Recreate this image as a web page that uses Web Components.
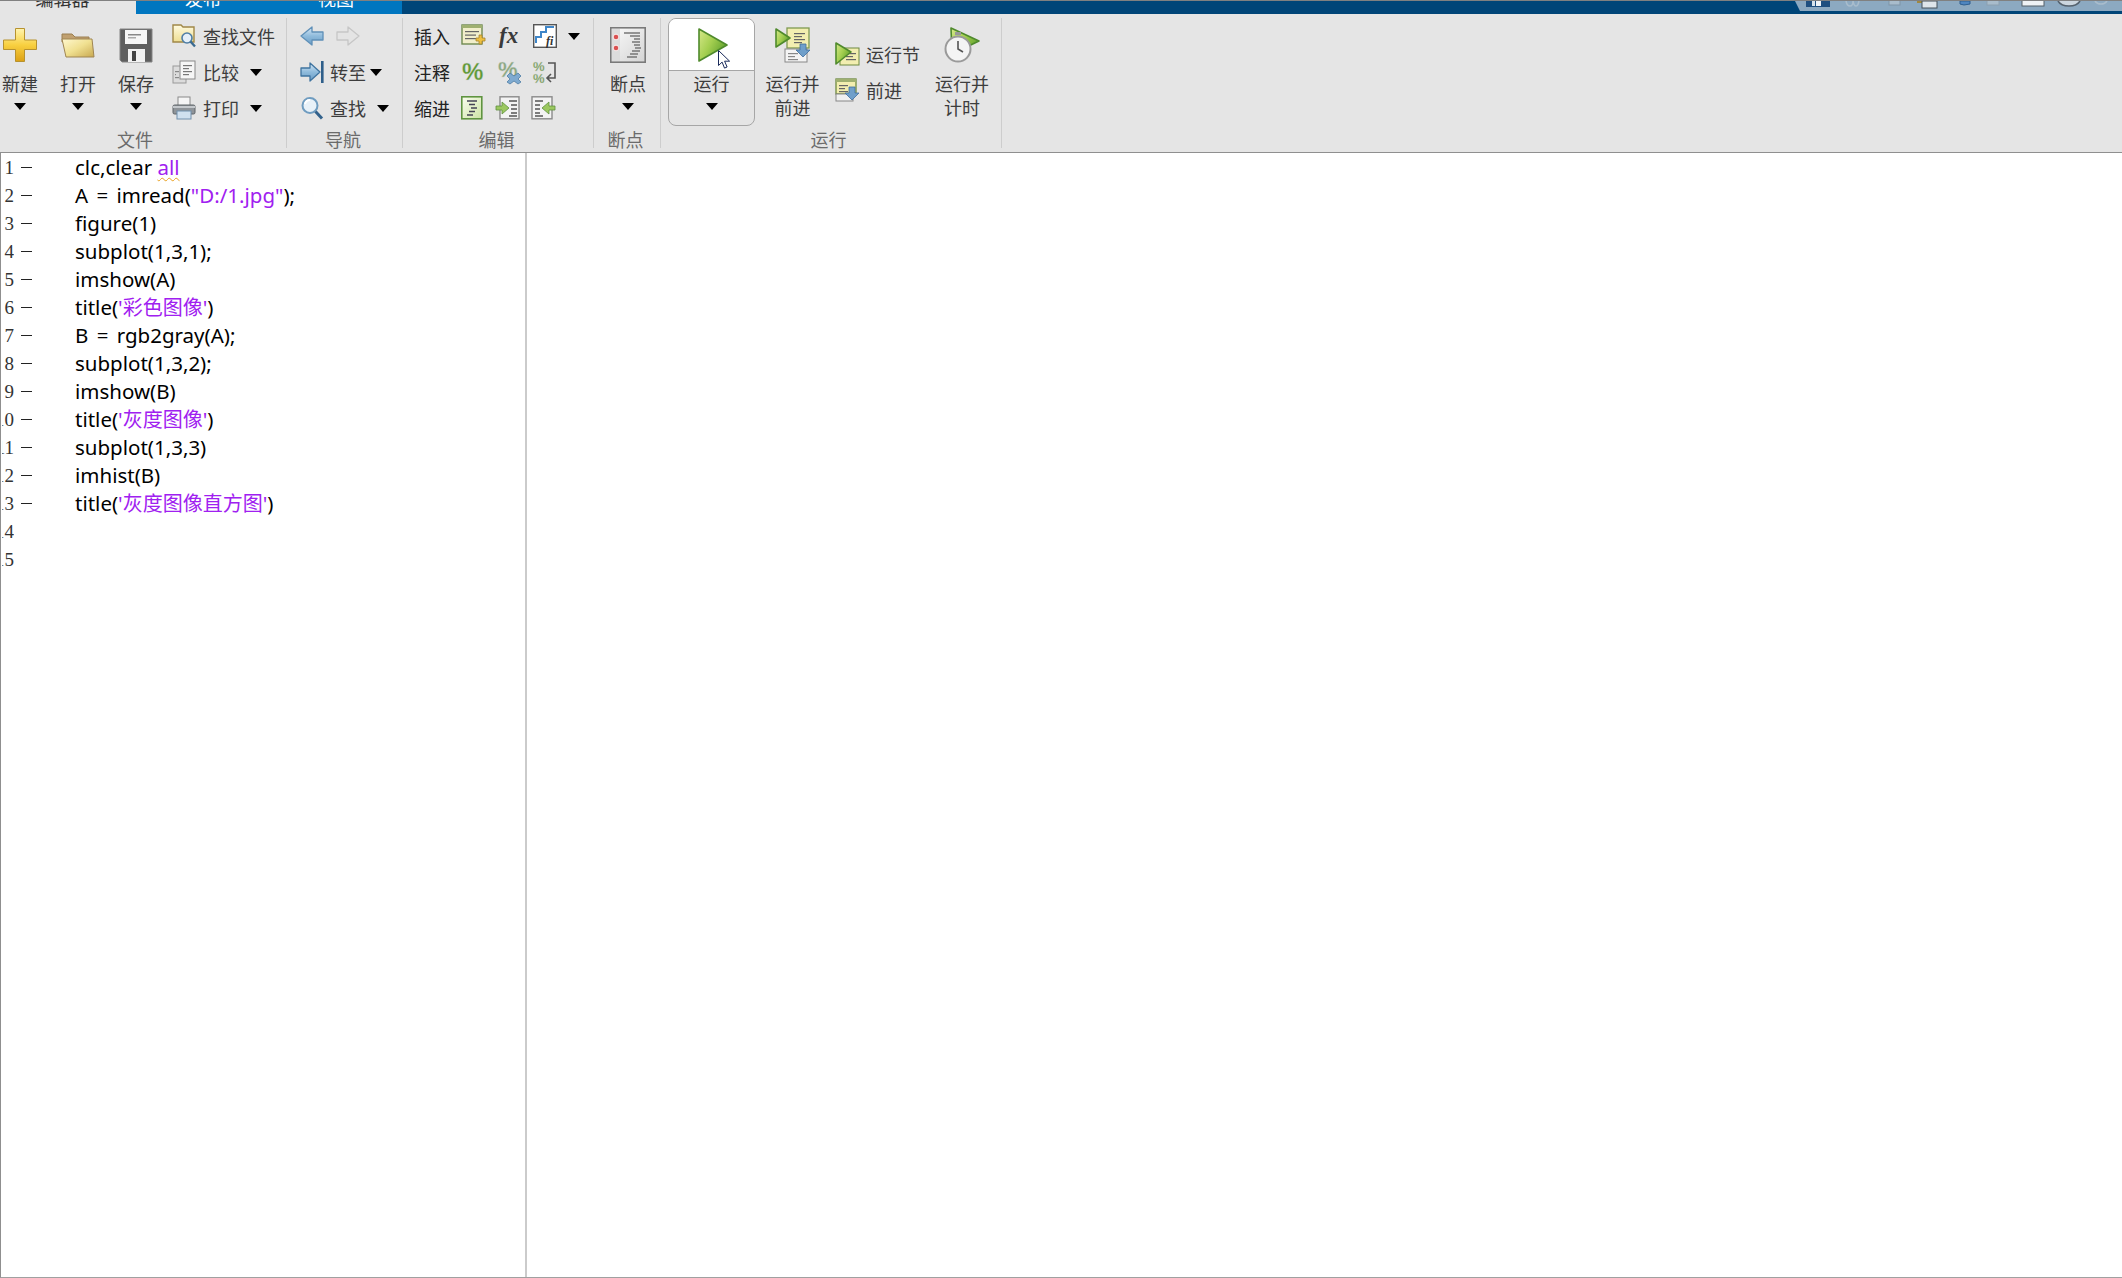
<!DOCTYPE html>
<html lang="zh">
<head>
<meta charset="utf-8">
<title>编辑器</title>
<style>
  html, body { margin: 0; height: 100%; background: #fff; overflow: hidden; }
  body { font-family: "Noto Sans CJK SC", "Liberation Sans", sans-serif; }
  ml-desktop > * { font-size: 18px; }
</style>
</head>
<body>
<ml-desktop>
  <ml-tabs slot="tabs"></ml-tabs>
  <ml-ribbon slot="ribbon">
    <ml-section label="文件" style="width:286px;margin-left:1px;--label-shift:17px">
      <ml-big icon="plus" style="width:38px">新建</ml-big>
      <ml-big icon="folder" style="width:56px;margin-left:11px">打开</ml-big>
      <ml-big icon="save" style="width:56px;margin-left:2px">保存</ml-big>
      <ml-col style="margin-left:8px">
        <ml-row><ml-icon name="findfile"></ml-icon><span style="margin-left:7px">查找文件</span></ml-row>
        <ml-row><ml-icon name="compare"></ml-icon><span style="margin-left:7px">比较</span><ml-arrow style="margin-left:11px"></ml-arrow></ml-row>
        <ml-row><ml-icon name="print"></ml-icon><span style="margin-left:7px">打印</span><ml-arrow style="margin-left:11px"></ml-arrow></ml-row>
      </ml-col>
    </ml-section>
    <ml-section label="导航" style="width:116px">
      <ml-col style="margin-left:13px">
        <ml-row><ml-icon name="back"></ml-icon><ml-icon name="forward" style="margin-left:12px"></ml-icon></ml-row>
        <ml-row><ml-icon name="goto"></ml-icon><span style="margin-left:6px">转至</span><ml-arrow style="margin-left:4px"></ml-arrow></ml-row>
        <ml-row><ml-icon name="search"></ml-icon><span style="margin-left:6px">查找</span><ml-arrow style="margin-left:11px"></ml-arrow></ml-row>
      </ml-col>
    </ml-section>
    <ml-section label="编辑" style="width:191px">
      <ml-col style="margin-left:11px;color:#222">
        <ml-row><span style="width:47px">插入</span><ml-icon name="insert"></ml-icon><ml-icon name="fx" style="margin-left:13px"></ml-icon><ml-icon name="stairs" style="margin-left:11px"></ml-icon><ml-arrow style="margin-left:11px"></ml-arrow></ml-row>
        <ml-row><span style="width:47px">注释</span><ml-icon name="pct"></ml-icon><ml-icon name="pctx" style="margin-left:13px"></ml-icon><ml-icon name="pctwrap" style="margin-left:11px"></ml-icon></ml-row>
        <ml-row><span style="width:47px">缩进</span><ml-icon name="indent"></ml-icon><ml-icon name="indentr" style="margin-left:13px"></ml-icon><ml-icon name="indentl" style="margin-left:11px"></ml-icon></ml-row>
      </ml-col>
    </ml-section>
    <ml-section label="断点" style="width:67px">
      <ml-big icon="breakpoints" style="width:66px;margin-left:1px">断点</ml-big>
    </ml-section>
    <ml-section label="运行" style="width:341px;--label-shift:5px">
      <ml-big icon="run" split style="width:87px;margin-left:7px">运行<ml-cursor slot="over"></ml-cursor></ml-big>
      <ml-big icon="runadvance" noarrow style="width:75px">运行并<br>前进</ml-big>
      <ml-col style="margin-left:5px;padding-top:18px;width:90px">
        <ml-row><ml-icon name="runsection"></ml-icon><span style="margin-left:7px">运行节</span></ml-row>
        <ml-row><ml-icon name="advance"></ml-icon><span style="margin-left:7px">前进</span></ml-row>
      </ml-col>
      <ml-big icon="runtime" noarrow style="width:74px">运行并<br>计时</ml-big>
    </ml-section>
  </ml-ribbon>
  <ml-editor slot="editor"></ml-editor>
</ml-desktop>

<script>
// ── icons ────────────────────────────────────────────────────────────────
const grad = (id, stops, x2 = 0, y2 = 1) => `<linearGradient id="${id}" x1="0" y1="0" x2="${x2}" y2="${y2}">${
  stops.map((c, i) => `<stop offset="${i / (stops.length - 1)}" stop-color="${c}"/>`).join('')}</linearGradient>`

const greenTri = (pts, id = 'g') => `<defs>${grad(id, ['#d6e88a', '#a4cf50', '#5fa02c'], 1, 0.6)}</defs><polygon points="${pts}" fill="url(#${id})" stroke="#4f8a2c" stroke-width="1.6" stroke-linejoin="round"/>`
const lines = (x, y, w, n, c = '#777', step = 3) => Array.from({ length: n }, (_, i) =>
  `<rect x="${x}" y="${y + i * step}" width="${i % 2 ? w - 3 : w}" height="1.2" fill="${c}"/>`).join('')
const pctText = (x, y, size, c) => `<text x="${x}" y="${y}" font-family="Liberation Sans, sans-serif" font-weight="700" font-size="${size}" fill="${c}" stroke="#d2d2d2" stroke-width=".3">%</text>`
const downArrow = (x, y) => `<path d="M${x + 3} ${y}h6v6h4l-7 7-7-7h4z" fill="#6f9fca" stroke="#3f6f9f" stroke-width=".8"/>`

const ICONS = {
  plus: [34, 34, `<defs>${grad('a', ['#fff4b0', '#f8d040', '#dca015'])}</defs><path d="M12.5.5h9v11.5h12v9.5h-12v12h-9v-12H.5V12h12z" fill="url(#a)" stroke="#b7922f"/>`],
  folder: [34, 26, `<defs>${grad('a', ['#fff8d0', '#f0e090', '#c8a850'], 1, 1)}</defs><path d="M1 5V2h10l3 3h14v5H1z" fill="#c0a070" stroke="#9a7f50"/><path d="M1 7h30l2 18H5z" fill="url(#a)" stroke="#9f8552"/>`],
  save: [34, 34, `<path d="M1 1h32v33H3l-2-2z" fill="#5f5f5f" stroke="#858585"/><rect x="6" y="2" width="22" height="14" fill="#f6f6f6"/><rect x="9" y="6" width="13" height="1.5" fill="#888"/><rect x="9" y="9" width="8" height="1.5" fill="#aaa"/><rect x="9" y="21" width="17" height="13" fill="#f2f2f2"/><rect x="13" y="23" width="4" height="10" fill="#444"/>`],
  findfile: [24, 24, `<defs>${grad('a', ['#fffbe0', '#eedd90'])}</defs><path d="M1 3V1h8l2 2h11v15H1z" fill="url(#a)" stroke="#a08848" stroke-width="1.4"/><circle cx="15" cy="14" r="5" fill="#e4eff8" stroke="#4f7ea5" stroke-width="1.6"/><path d="M18.5 17.5l4.5 5" stroke="#3a6a90" stroke-width="2.4"/>`],
  compare: [24, 24, `<rect x="1" y="6" width="13" height="17" fill="#dcdcdc" stroke="#9a9a9a"/><rect x="8" y="1" width="15" height="18" fill="#f6f6f6" stroke="#8a8a8a"/>${lines(11, 5, 9, 4, '#777')}${lines(3, 11, 4, 3, '#888')}`],
  print: [24, 24, `<rect x="6" y="1" width="12" height="9" fill="#f5f5f5" stroke="#8a8a8a"/><rect x="1" y="9" width="22" height="9" rx="1.5" fill="#8f9499" stroke="#5f6469"/><rect x="1" y="10" width="22" height="2" fill="#c4c8cc"/><rect x="5" y="15" width="14" height="8" fill="#cfe0ef" stroke="#7090ad"/>`],
  back: [24, 24, `<defs>${grad('a', ['#d8e8f5', '#8fbbdc', '#6a9cc5'])}</defs><path d="M1 12L12 3v5h11v8H12v5z" fill="url(#a)" stroke="#5f90b8" stroke-width="1.3" stroke-linejoin="round"/>`],
  forward: [24, 24, `<path d="M23 12L12 3v5H1v8h11v5z" fill="#e4e4e4" stroke="#c6c6c6" stroke-width="1.3" stroke-linejoin="round"/>`],
  goto: [24, 24, `<defs>${grad('a', ['#d8e8f5', '#8fbbdc', '#6a9cc5'])}</defs><path d="M1 8h9V3l10 9-10 9v-5H1z" fill="url(#a)" stroke="#3f74a0" stroke-width="1.3" stroke-linejoin="round"/><rect x="21" y="1" width="2.6" height="22" fill="#2f5f8a"/>`],
  search: [24, 24, `<circle cx="10" cy="9.5" r="7.5" fill="#e8f1f8" stroke="#6f9cc0" stroke-width="2"/><path d="M5 8a5 5 0 0 1 5-4" stroke="#fff" stroke-width="2" fill="none"/><path d="M15.5 15.5l6.5 7" stroke="#33628c" stroke-width="3"/>`],
  insert: [24, 24, `<rect x="1" y="1" width="20" height="19" fill="#f1eecb" stroke="#6f8a50" stroke-width="1.4"/><rect x="1" y="1" width="20" height="3" fill="#9fb070"/>${lines(4, 7, 14, 3, '#666', 3.5)}<path d="M15 14h3v-3h3v3h3v3h-3v3h-3v-3h-3z" fill="#edc040" stroke="#a8842c" stroke-width=".8"/>`],
  fx: [24, 24, `<text x="1" y="19" font-family="Liberation Serif, serif" font-style="italic" font-weight="700" font-size="23" fill="#3a3a3a">fx</text>`],
  stairs: [24, 24, `<rect x=".7" y=".7" width="22.6" height="22.6" fill="#fff" stroke="#555" stroke-width="1.4"/><path d="M3 19v-6h5V8h5V3h8" fill="none" stroke="#3f86c8" stroke-width="2"/><text x="13" y="21" font-family="Liberation Serif, serif" font-style="italic" font-weight="700" font-size="12" fill="#333">fi</text>`],
  pct: [24, 24, pctText(1, 20, 24, '#5f9a35')],
  pctx: [24, 24, pctText(0, 17, 22, '#8aa880') + `<path d="M12 13l4 3 4-3 3 3-3 3 3 3-3 2-4-3-4 3-3-2 3-3-3-3z" fill="#7eaad0" stroke="#4f7ea5" stroke-width=".8"/>`],
  pctwrap: [24, 24, pctText(0, 11, 13, '#6f9a50') + pctText(0, 23, 13, '#6f9a50') + `<path d="M15 3h7v15h-7M18 14l-4 4 4 4" fill="none" stroke="#555" stroke-width="1.6"/>`],
  indent: [22, 24, `<defs>${grad('a', ['#fafdf0', '#cbe3a4'], 1, 1)}</defs><rect x=".8" y=".8" width="20" height="22" fill="url(#a)" stroke="#5f9440" stroke-width="1.6"/><path d="M6 5h10M8 8.5h6M10 12h6M8 15.5h6M6 19h6" stroke="#445" stroke-width="1.3"/>`],
  indentr: [24, 24, `<rect x="4" y=".8" width="19" height="22" fill="#f3f3f3" stroke="#8a8a8a" stroke-width="1.4"/><path d="M13 5h8M15 9h6M15 13h6M15 17h6M13 20h8" stroke="#555" stroke-width="1.3"/><path d="M0 10h6V6l7 6-7 6v-4H0z" fill="#9cc860" stroke="#5f9040" stroke-width=".8"/>`],
  indentl: [24, 24, `<rect x="1" y=".8" width="20" height="22" fill="#f3f3f3" stroke="#8a8a8a" stroke-width="1.4"/><path d="M4 5h8M4 9h5M4 13h5M4 17h5M4 20h8" stroke="#555" stroke-width="1.3"/><path d="M24 10h-6V6l-7 6 7 6v-4h6z" fill="#9cc860" stroke="#5f9040" stroke-width=".8"/>`],
  breakpoints: [36, 36, `<defs>${grad('a', ['#fafafa', '#d4d4d4'], 1, 1)}</defs><rect x=".8" y=".8" width="34.4" height="34.4" fill="url(#a)" stroke="#7a7a7a" stroke-width="1.6"/><rect x="2" y="2" width="8" height="32" fill="#dcdcdc"/><circle cx="6" cy="10" r="2.8" fill="#d95050" stroke="#fff" stroke-width=".8"/><circle cx="6" cy="21" r="2.8" fill="#d95050" stroke="#fff" stroke-width=".8"/><path d="M14 6h16M20 9h10M24 12h6M22 15h8M24 18h6M25 21h6M22 24h8M20 27h8M17 30h10" stroke="#777" stroke-width="1.3"/>`],
  run: [30, 34, greenTri('1,1 29,17 1,33')],
  runadvance: [36, 36, `<rect x="12" y="1" width="22" height="20" fill="#f2eeb0" stroke="#7f9a50" stroke-width="1.3"/>${lines(19, 6, 11, 4, '#666', 3)}` + greenTri('1,2 15,11 1,20') + `<rect x="10" y="22" width="22" height="13" fill="#f4f4f4" stroke="#888"/>${lines(13, 26, 10, 3, '#888', 3)}` + downArrow(22, 17)],
  runsection: [24, 24, `<rect x="5" y="6" width="19" height="17" fill="#f2eeb0" stroke="#6f8a40"/>${lines(11, 11, 10, 3, '#666', 3)}` + greenTri('1,1 16,10 1,22')],
  advance: [24, 24, `<rect x="1" y="1" width="20" height="15" fill="#f2eeb0" stroke="#6f8a40" stroke-width="1.3"/><rect x="1" y="1" width="20" height="3" fill="#9fb070"/>${lines(4, 7, 9, 3, '#666', 3)}<rect x="1" y="16" width="17" height="7" fill="#f0f0f0" stroke="#888"/>` + downArrow(11, 9)],
  runtime: [36, 36, greenTri('7,1 35,14 8,27') + `<circle cx="14" cy="22" r="12.5" fill="#f4f4f4" stroke="#9a9a9a" stroke-width="2"/><rect x="11" y="5" width="6" height="3" fill="#999"/><path d="M14 14v8l5 3" fill="none" stroke="#555" stroke-width="1.6"/>`]
}

class MlIcon extends HTMLElement {
  connectedCallback() {
    const [w, h, body] = ICONS[this.getAttribute('name')]
    this.attachShadow({ mode: 'open' }).innerHTML = `
      <style>:host { display: inline-flex; flex: none; } svg { display: block; overflow: visible; }</style>
      <svg xmlns="http://www.w3.org/2000/svg" width="${w}" height="${h}" viewBox="0 0 ${w} ${h}">${body}</svg>`
  }
}

class MlArrow extends HTMLElement {
  constructor() {
    super()
    this.attachShadow({ mode: 'open' }).innerHTML = `
      <style>
        :host { display: inline-block; flex: none; width: 0; height: 0;
          border-left: 6.5px solid transparent; border-right: 6.5px solid transparent; border-top: 7px solid #000; }
      </style>`
  }
}

class MlCursor extends HTMLElement {
  constructor() {
    super()
    this.attachShadow({ mode: 'open' }).innerHTML = `
      <style>:host { position: absolute; left: 49px; top: 31px; display: block; line-height: 0; }</style>
      <svg width="13" height="19" viewBox="0 0 13 19"><path d="M.5.5v15l3.6-3.4 2.4 6 2.6-1.1-2.5-5.8h5z" fill="#fff" stroke="#1a2a5a" stroke-width="1"/></svg>`
  }
}

// ── ribbon ───────────────────────────────────────────────────────────────
class MlRow extends HTMLElement {
  constructor() {
    super()
    this.attachShadow({ mode: 'open' }).innerHTML = `
      <style>:host { display: flex; align-items: center; height: 36px; white-space: nowrap; }</style><slot></slot>`
  }
}

class MlCol extends HTMLElement {
  constructor() {
    super()
    this.attachShadow({ mode: 'open' }).innerHTML = `
      <style>:host { display: flex; flex-direction: column; flex: none; }</style><slot></slot>`
  }
}

class MlBig extends HTMLElement {
  connectedCallback() {
    const arrow = !this.hasAttribute('noarrow')
    this.attachShadow({ mode: 'open' }).innerHTML = `
      <style>
        :host { display: flex; flex-direction: column; flex: none; align-items: stretch; height: 108px;
          box-sizing: border-box; position: relative; text-align: center; }
        :host([split]) { border: 1px solid #a6a6a6; border-radius: 8px; }
        .top { height: 53px; display: flex; align-items: center; justify-content: center; flex: none; box-sizing: border-box; }
        :host([split]) .top { height: 52px; background: #fff; border-radius: 7px 7px 0 0; border-bottom: 1px solid #a6a6a6; padding: 1px 0 0 2px; }
        .label { line-height: 24px; white-space: nowrap; display: block; }
        .arrow { display: flex; justify-content: center; margin-top: 8px; }
      </style>
      <div class="top"><ml-icon name="${this.getAttribute('icon')}"></ml-icon></div>
      <span class="label"><slot></slot></span>
      ${arrow ? '<div class="arrow"><ml-arrow></ml-arrow></div>' : ''}
      <slot name="over"></slot>`
  }
}

class MlSection extends HTMLElement {
  connectedCallback() {
    this.attachShadow({ mode: 'open' }).innerHTML = `
      <style>
        :host { display: grid; grid-template-rows: 108px 22px; box-sizing: border-box; flex: none; height: 130px;
          border-right: 1px solid #cdcdcd; color: #3d3d3d; font-size: 18px; }
        .body { display: flex; min-width: 0; }
        .label { text-align: center; color: #6b6b6b; line-height: 26px; padding-right: var(--label-shift, 3px); }
      </style>
      <div class="body"><slot></slot></div>
      <div class="label">${this.getAttribute('label')}</div>`
  }
}

class MlRibbon extends HTMLElement {
  constructor() {
    super()
    this.attachShadow({ mode: 'open' }).innerHTML = `
      <style>
        :host { display: flex; height: 139px; box-sizing: border-box; padding-top: 4px;
          background: #e5e5e5; border-bottom: 1px solid #8f8f8f; }
      </style><slot></slot>`
  }
}

// ── tabs ─────────────────────────────────────────────────────────────────
class MlTabs extends HTMLElement {
  constructor() {
    super()
    this.attachShadow({ mode: 'open' }).innerHTML = `
      <style>
        :host { display: flex; height: 14px; box-sizing: border-box; border-top: 1px solid #808080;
          background: #004578; overflow: hidden; font-size: 18px; }
        .tab { height: 13px; overflow: hidden; text-align: center; color: #fff; background: #0076c0; flex: none; }
        .tab span { display: block; line-height: 24px; margin-top: -15px; }
        .tab.on { background: #e5e5e5; color: #333; padding-right: 11px; box-sizing: border-box; width: 136px; }
        .fill { flex: 1; }
        .quick { width: 327px; height: 10px; background: #8ca9c1; display: flex; overflow: hidden;
          clip-path: polygon(0 0, 100% 0, 100% 100%, 5px 100%); }
        .quick svg { display: block; }
      </style>
      <div class="tab on"><span>编辑器</span></div>
      <div class="tab" style="width:134px"><span>发布</span></div>
      <div class="tab" style="width:132px"><span>视图</span></div>
      <div class="fill"></div>
      <div class="quick">
        <svg width="327" height="10" viewBox="0 0 327 10">
          <rect x="11" y="0" width="24" height="6" fill="#1f4f80"/><rect x="17" y="0" width="3" height="5" fill="#d8e4ee"/><rect x="21" y="0" width="5" height="5" fill="#f0f4f8"/>
          <path d="M51 0q1 5 4 5t3-5M58 0q1 5 3 5t3-5" fill="none" stroke="#a8bccc" stroke-width="1.5"/>
          <rect x="94" y="-4" width="11" height="8" fill="#a8bccc" stroke="#7f95a8"/>
          <rect x="122" y="0" width="8" height="2" fill="#a08840"/><rect x="127" y="0" width="15" height="7" fill="#dfe5ea" stroke="#44505a"/>
          <path d="M165 0v3q3 2 10 0v-3z" fill="#4f86c0" stroke="#2f5f90"/>
          <rect x="192" y="-3" width="12" height="7" fill="#a8bccc" stroke="#8ca0b0"/>
          <rect x="227" y="-2" width="22" height="7" fill="#eef2f5" stroke="#556068"/>
          <path d="M263 0q3 5 11 5t11-5" fill="#cbd6df" stroke="#55626e" stroke-width="1.6"/>
          <path d="M300 0q2 3 6 3t6-3" fill="none" stroke="#a8bccc" stroke-width="1.6"/>
        </svg>
      </div>`
  }
}

// ── editor ───────────────────────────────────────────────────────────────
const CODE = [
  'clc,clear <u>all</u>',
  'A<i> = </i>imread(<s>"D:/1.jpg"</s>);',
  'figure(1)',
  'subplot(1,3,1);',
  'imshow(A)',
  "title(<s>'<b>彩色图像</b>'</s>)",
  'B<i> = </i>rgb2gray(A);',
  'subplot(1,3,2);',
  'imshow(B)',
  "title(<s>'<b>灰度图像</b>'</s>)",
  'subplot(1,3,3)',
  'imhist(B)',
  "title(<s>'<b>灰度图像直方图</b>'</s>)",
  '',
  ''
]

class MlCodeLine extends HTMLElement {
  connectedCallback() {
    const code = this.innerHTML
    this.innerHTML = ''
    this.attachShadow({ mode: 'open' }).innerHTML = `
      <style>
        :host { display: flex; height: 28px; align-items: center; }
        .num { width: 12px; flex: none; overflow: hidden; display: flex; justify-content: flex-end; margin-left: 1px;
          font: 19px/28px "Liberation Serif", serif; color: #333; }
        .dash { width: 11px; height: 1px; background: #222; flex: none; margin: 0 0 2px 7px; visibility: ${this.hasAttribute('exec') ? 'visible' : 'hidden'}; }
        .code { margin-left: 43px; font: 20.5px/28px "Noto Sans", "Noto Sans CJK SC", sans-serif; color: #000; white-space: pre; position: relative; top: -1px; }
        s { text-decoration: none; color: #a020f0; }
        b { font: 20px/28px "Noto Sans CJK SC", sans-serif; }
        i { font-style: normal; word-spacing: 3px; }
        u { color: #a020f0; text-decoration: underline wavy #e8a020 1px; text-underline-offset: 2px; }
      </style>
      <div class="num">${this.getAttribute('n')}</div><div class="dash"></div><div class="code">${code}</div>`
  }
}

class MlEditor extends HTMLElement {
  constructor() {
    super()
    this.attachShadow({ mode: 'open' }).innerHTML = `
      <style>
        :host { display: flex; flex: 1; min-height: 0; box-sizing: border-box; background: #fff;
          border-left: 1px solid #8f8f8f; border-bottom: 1px solid #a0a0a0; }
        .pane { width: 524px; border-right: 2px solid #cbcbcb; padding-top: 1px; box-sizing: content-box; }
      </style>
      <div class="pane">${CODE.map((c, i) => `<ml-code-line n="${i + 1}" ${c ? 'exec' : ''}>${c}</ml-code-line>`).join('')}</div>`
  }
}

class MlDesktop extends HTMLElement {
  constructor() {
    super()
    this.attachShadow({ mode: 'open' }).innerHTML = `
      <style>:host { display: flex; flex-direction: column; height: 1278px; overflow: hidden; }</style>
      <slot name="tabs"></slot><slot name="ribbon"></slot><slot name="editor"></slot>`
  }
}

customElements.define('ml-icon', MlIcon)
customElements.define('ml-arrow', MlArrow)
customElements.define('ml-cursor', MlCursor)
customElements.define('ml-row', MlRow)
customElements.define('ml-col', MlCol)
customElements.define('ml-big', MlBig)
customElements.define('ml-section', MlSection)
customElements.define('ml-ribbon', MlRibbon)
customElements.define('ml-tabs', MlTabs)
customElements.define('ml-code-line', MlCodeLine)
customElements.define('ml-editor', MlEditor)
customElements.define('ml-desktop', MlDesktop)
</script>
</body>
</html>
